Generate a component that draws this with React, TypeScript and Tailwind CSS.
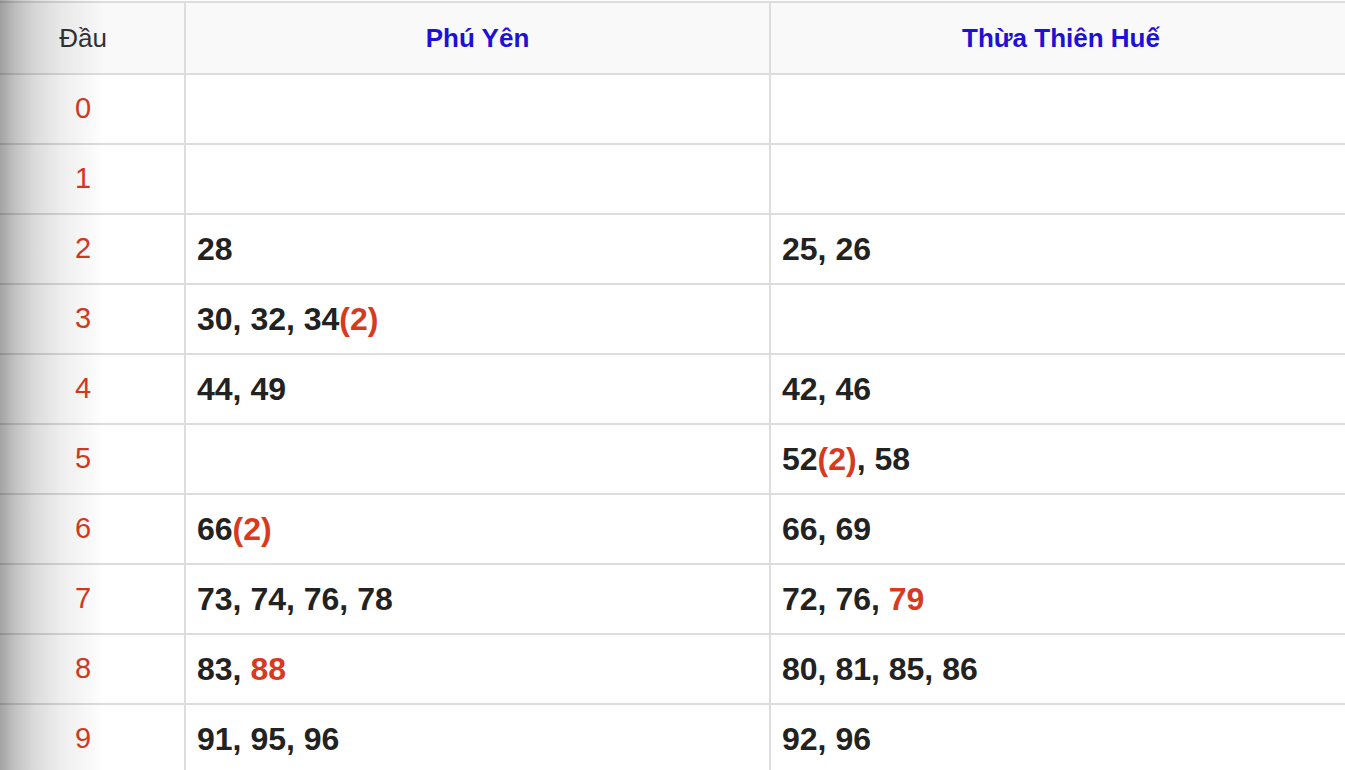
import React from "react";

type Part = { t: string; red?: boolean };

const rows: { head: string; a: Part[]; b: Part[] }[] = [
  { head: "0", a: [], b: [] },
  { head: "1", a: [], b: [] },
  { head: "2", a: [{ t: "28" }], b: [{ t: "25, 26" }] },
  { head: "3", a: [{ t: "30, 32, 34" }, { t: "(2)", red: true }], b: [] },
  { head: "4", a: [{ t: "44, 49" }], b: [{ t: "42, 46" }] },
  { head: "5", a: [], b: [{ t: "52" }, { t: "(2)", red: true }, { t: ", 58" }] },
  { head: "6", a: [{ t: "66" }, { t: "(2)", red: true }], b: [{ t: "66, 69" }] },
  { head: "7", a: [{ t: "73, 74, 76, 78" }], b: [{ t: "72, 76, " }, { t: "79", red: true }] },
  { head: "8", a: [{ t: "83, " }, { t: "88", red: true }], b: [{ t: "80, 81, 85, 86" }] },
  { head: "9", a: [{ t: "91, 95, 96" }], b: [{ t: "92, 96" }] },
];

function Nums({ parts }: { parts: Part[] }) {
  return (
    <span className="text-[32px] font-bold text-[#222]">
      {parts.map((p, i) => (
        <span key={i} className={p.red ? "text-[#d83a1e]" : ""}>
          {p.t}
        </span>
      ))}
    </span>
  );
}

export default function App() {
  return (
    <div className="relative h-[770px] w-[1345px] overflow-hidden bg-white pt-px font-['Liberation_Sans',Arial,sans-serif]">
      <div className="border-t-2 border-[#dddddd]">
        <div className="flex h-[72px] border-b-2 border-[#dddddd] bg-[#f9f9f9]">
          <div className="flex w-[186px] items-center justify-center border-r-2 border-[#dddddd] pr-[18px] text-[26px] text-[#333]">
            Đầu
          </div>
          <div className="flex w-[585px] items-center justify-center border-r-2 border-[#dddddd] text-[26px] font-bold text-[#1d10d8]">
            Phú Yên
          </div>
          <div className="flex flex-1 items-center justify-center pl-[6px] text-[26px] font-bold text-[#1d10d8]">
            Thừa Thiên Huế
          </div>
        </div>
        {rows.map((r) => (
          <div key={r.head} className="flex h-[70px] border-b-2 border-[#dddddd]">
            <div className="flex w-[186px] items-center justify-center border-r-2 border-[#dddddd] pr-[18px] text-[29px] text-[#d83a1e]">
              {r.head}
            </div>
            <div className="flex w-[585px] items-center border-r-2 border-[#dddddd] pl-[11px]">
              <Nums parts={r.a} />
            </div>
            <div className="flex flex-1 items-center pl-[11px]">
              <Nums parts={r.b} />
            </div>
          </div>
        ))}
      </div>
      <div className="pointer-events-none absolute inset-y-0 left-0 w-[102px] bg-[linear-gradient(to_right,rgba(0,0,0,0.36),rgba(0,0,0,0.24)_15px,rgba(0,0,0,0.14)_35px,rgba(0,0,0,0.07)_60px,rgba(0,0,0,0.03)_85px,rgba(0,0,0,0.012)_100px,transparent_101px)]" />
    </div>
  );
}
